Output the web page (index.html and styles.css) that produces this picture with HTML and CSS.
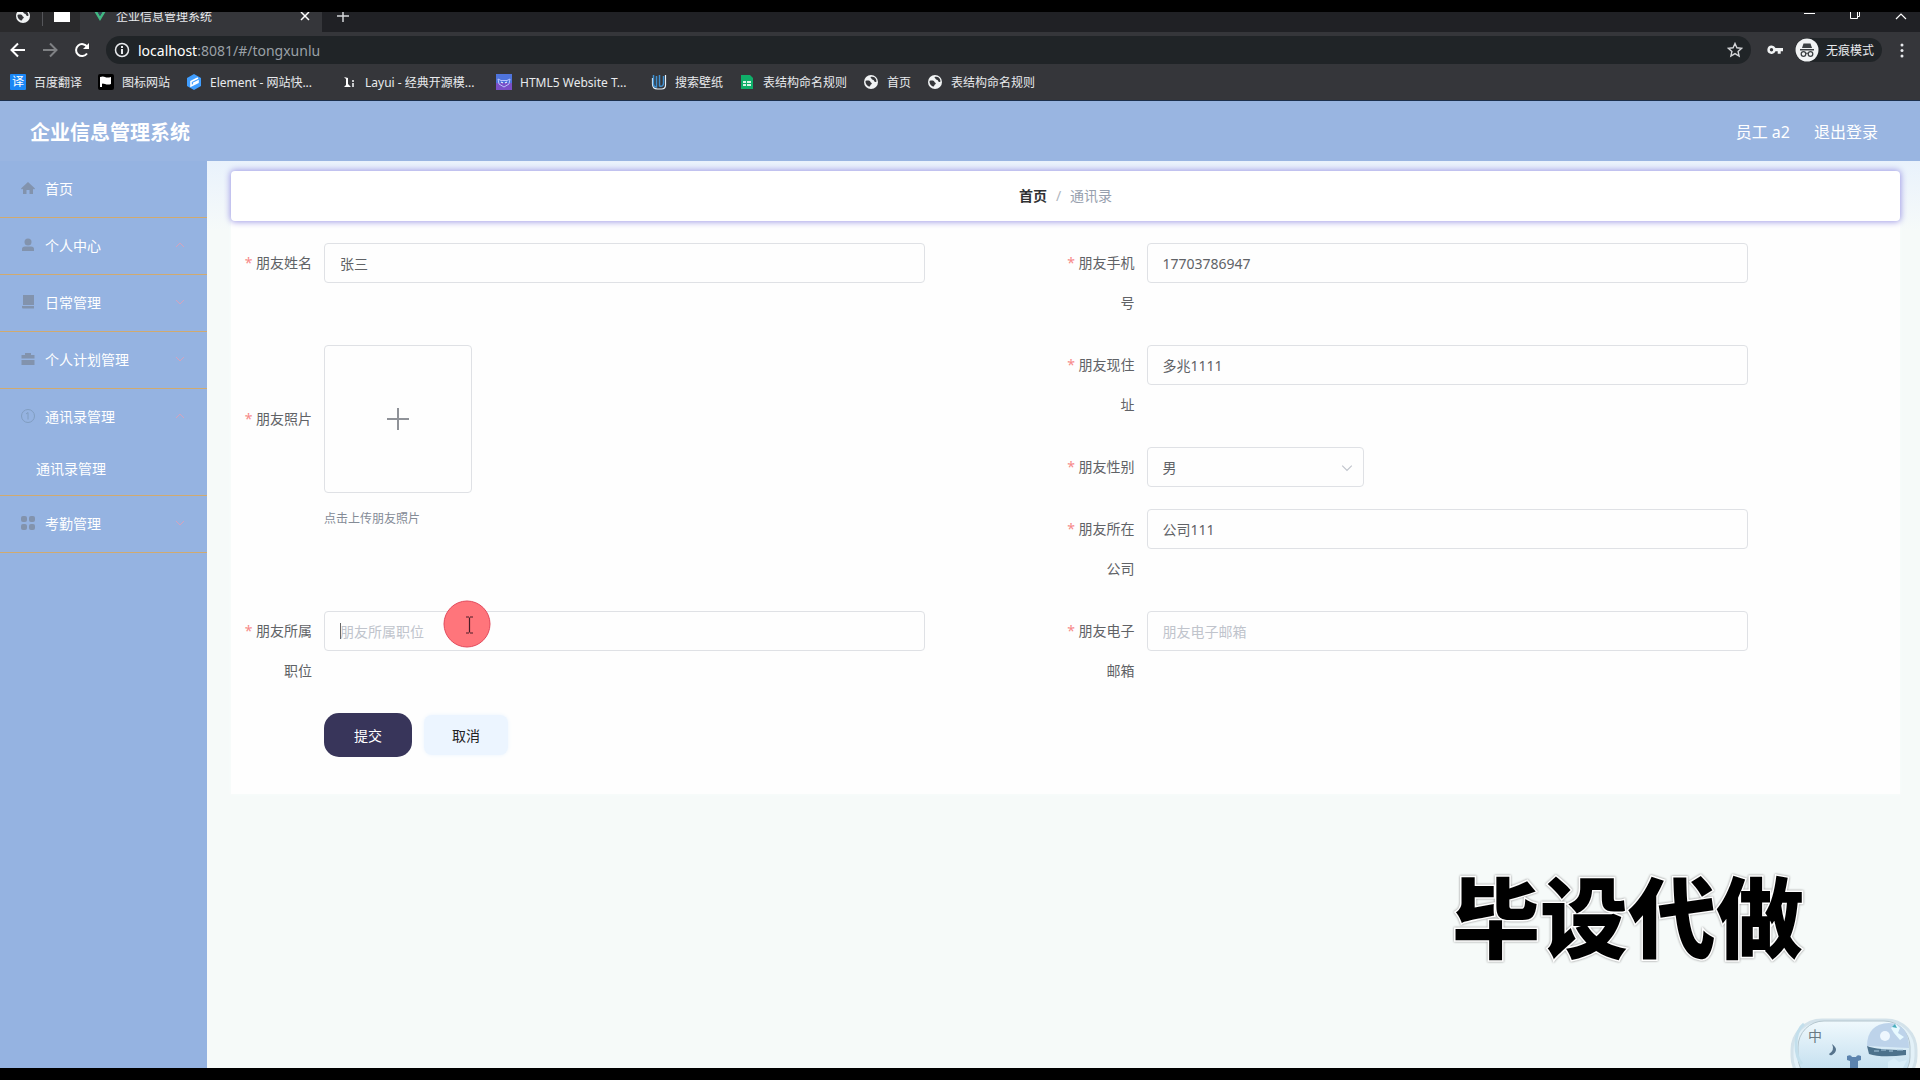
FILE: index.html
```html
<!DOCTYPE html>
<html lang="zh-CN">
<head>
<meta charset="utf-8">
<meta name="viewport" content="width=device-width, initial-scale=1">
<title>企业信息管理系统</title>
<link rel="stylesheet" href="styles.css">
</head>
<body>
<svg class="defs" width="0" height="0" aria-hidden="true">
  <symbol id="globe" viewBox="0 0 16 16">
    <circle cx="8" cy="8" r="7" fill="#f1f3f4"/>
    <path d="M2.500 7c2-.8 4.500-.4 5 .9.200.9 1.400.5 1.300 1.600-.1 1.100-1.300.8-1.500 2-.1.900-.6 1.200-1.500.9C3.600 11.500 2.300 9.500 2.500 7z" fill="#35363a"/>
    <path d="M7.500 3c1.500-.6 3-.4 4.200.5 1.300 1.100 1.900 2.600 1.700 4.200-1.400.6-2.300-.1-2.500-1.100-.2-1-1.900-.4-2.200-1.500C8.500 4.200 7.400 4 7.500 3z" fill="#35363a"/>
  </symbol>
  <symbol id="down" viewBox="0 0 10 10"><path d="M1 3l4 4 4-4" fill="none" stroke="currentColor" stroke-width="1"/></symbol>
  <symbol id="up" viewBox="0 0 10 10"><path d="M1 7l4-4 4 4" fill="none" stroke="currentColor" stroke-width="1"/></symbol>
</svg>

<div class="browser">
  <div class="tabstrip">
    <div class="tabs">
      <div class="pins">
        <svg class="pin" viewBox="0 0 16 16"><use href="#globe"/></svg>
        <i class="pin-line"></i>
        <svg class="pin" viewBox="0 0 16 16"><path d="M0 2h16v12H0z" fill="#fff"/></svg>
      </div>
      <div class="tab">
        <svg class="ico12" viewBox="0 0 12 12"><path d="M0 1h3l3 5 3-5h3L6 11z" fill="#41b883"/><path d="M3 1h2l1 2 1-2h2L6 6z" fill="#35495e"/></svg>
        <span class="tab-title">企业信息管理系统</span>
        <button class="plain" aria-label="关闭标签页"><svg class="ico10" viewBox="0 0 10 10"><path d="M1 1l8 8M9 1L1 9" stroke="#fff" stroke-width="1.500"/></svg></button>
      </div>
      <button class="plain newtab" aria-label="新标签页"><svg class="ico12" viewBox="0 0 12 12"><path d="M6 0v12M0 6h12" stroke="#d5d7da" stroke-width="1.500"/></svg></button>
      <div class="winctl">
        <svg class="ico12" viewBox="0 0 12 12"><path d="M1 3.500h11" stroke="#fff" stroke-width="1"/></svg>
        <svg class="ico12" viewBox="0 0 12 12"><path d="M1.500 0v8.500h7V0M8 6.500h2.500V0" fill="none" stroke="#fff"/></svg>
        <svg class="ico12" viewBox="0 0 12 12"><path d="M1 9l5-5 5 5" fill="none" stroke="#fff" stroke-width="1.200"/></svg>
      </div>
    </div>
  </div>
  <div class="toolbar">
    <button class="plain" aria-label="后退"><svg class="ico16" viewBox="0 0 16 16"><path d="M15 8H2M8 1.500L1.500 8 8 14.500" fill="none" stroke="#fff" stroke-width="2"/></svg></button>
    <button class="plain" aria-label="前进"><svg class="ico16" viewBox="0 0 16 16"><path d="M1 8h13M8 1.500L14.500 8 8 14.500" fill="none" stroke="#7f8184" stroke-width="2"/></svg></button>
    <button class="plain" aria-label="重新加载"><svg class="ico16" viewBox="0 0 16 16"><path d="M13 11.500A6 6 0 1 1 13.200 5" fill="none" stroke="#fff" stroke-width="2"/><path d="M15 1v6H9z" fill="#fff"/></svg></button>
    <div class="address">
      <svg class="ico16" viewBox="0 0 16 16"><circle cx="8" cy="8" r="6.500" fill="none" stroke="#e8eaed" stroke-width="1.500"/><path d="M8 7v5M8 4v2" stroke="#e8eaed" stroke-width="2"/></svg>
      <span class="url"><b>localhost</b>:8081/#/tongxunlu</span>
      <svg class="ico16" viewBox="0 0 16 16"><path d="M8 1.500l1.900 4.300 4.700.5-3.500 3.100 1 4.600L8 11.600 3.900 14l1-4.600L1.400 6.300l4.700-.5z" fill="none" stroke="#d5d7da" stroke-width="1.400"/></svg>
    </div>
    <svg class="ico16" viewBox="0 0 16 16"><path d="M4.500 3.500a4.200 4.200 0 1 0 4 5.700h2.200v2.600h3V9.200H16V6H8.500a4.200 4.200 0 0 0-4-2.500zm0 2.500a1.700 1.700 0 1 1 0 3.400 1.700 1.700 0 0 1 0-3.400z" fill="#f1f3f4"/></svg>
    <div class="incog">
      <svg class="ico24" viewBox="0 0 24 24"><circle cx="12" cy="12" r="11.500" fill="#f1f3f4"/><path d="M8.500 5.500h7l1.500 4.500H7zM5 11h14v1.500H5z" fill="#3c4043"/><circle cx="8.500" cy="16" r="2.300" fill="none" stroke="#3c4043" stroke-width="1.300"/><circle cx="15.500" cy="16" r="2.300" fill="none" stroke="#3c4043" stroke-width="1.300"/><path d="M10.800 15.500q1.200-.8 2.400 0" fill="none" stroke="#3c4043"/></svg>
      <span>无痕模式</span>
    </div>
    <button class="plain" aria-label="菜单"><svg class="ico16" viewBox="0 0 16 16"><g fill="#e8eaed"><circle cx="8" cy="3" r="1.500"/><circle cx="8" cy="8.500" r="1.500"/><circle cx="8" cy="14" r="1.500"/></g></svg></button>
  </div>
  <nav class="bookmarks">
    <a href="#"><span class="bm-fanyi">译</span><span>百度翻译</span></a>
    <a href="#"><svg class="ico16" viewBox="0 0 16 16"><rect width="16" height="16" rx="2" fill="#000"/><path d="M2 3q3-1 5 0t6 0v7q-3 1-6 0t-3 0v3H2z" fill="#fff"/></svg><span>图标网站</span></a>
    <a href="#"><svg class="ico16" viewBox="0 0 16 16"><path d="M8 0l7 4v8l-7 4-7-4V4z" fill="#409eff"/><path d="M12 4L5 7.500V12l7-3.500V7L7 9.500" fill="none" stroke="#fff" stroke-width="1.600"/></svg><span class="bm-long">Element - 网站快...</span></a>
    <a href="#"><svg class="ico16" viewBox="0 0 16 16"><path d="M3 3l4 1v6l3 3H3l2-2V5z" fill="#fff"/><path d="M11 6h2v2h-2zM11 9h2v4h-2z" fill="#c9cacc"/></svg><span class="bm-long">Layui - 经典开源模...</span></a>
    <a href="#"><svg class="ico16" viewBox="0 0 16 16"><rect width="16" height="16" fill="#4f74dc"/><path d="M0 9h16v7H0z" fill="#7a4fc8"/><path d="M2 5l3 1.500h6L14 5l-1 5-5 3-5-3z" fill="none" stroke="#b9c4ff"/><path d="M5 8l2 1M11 8L9 9" stroke="#fff"/></svg><span class="bm-long">HTML5 Website T...</span></a>
    <a href="#"><svg class="ico16" viewBox="0 0 16 16"><path d="M1.500 4v6q0 5 5 5h4q4 0 4-4V1" fill="none" stroke="#e6f2fb" stroke-width="1.200"/><path d="M2.500 1v9q0 3 3 3V2M8.500 1v11q4 1 4-3V2" fill="none" stroke="#3f8fd0" stroke-width="1.500"/></svg><span>搜索壁纸</span></a>
    <a href="#"><svg class="ico16" viewBox="0 0 16 16"><path d="M2 1h9l3 3v11H2z" fill="#0fae69"/><path d="M4 7h3v2H4zM8 7h4v2H8zM4 10h3v2H4zM8 10h4v2H8z" fill="#d8f5e6"/></svg><span>表结构命名规则</span></a>
    <a href="#"><svg class="ico16" viewBox="0 0 16 16"><use href="#globe"/></svg><span>首页</span></a>
    <a href="#"><svg class="ico16" viewBox="0 0 16 16"><use href="#globe"/></svg><span>表结构命名规则</span></a>
  </nav>
</div>

<div class="app">
  <header class="header">
    <h1>企业信息管理系统</h1>
    <div class="account"><span>员工 a2</span><a href="#">退出登录</a></div>
  </header>

  <div class="body">
    <nav class="sidebar">
      <a class="item" href="#"><svg class="ico14" viewBox="0 0 14 14"><path d="M7 1L0 7.500l1 1L2 7.700V13h3.500V9h3v4H12V7.700l1 .8 1-1z"/></svg><span>首页</span></a>
      <a class="item" href="#"><svg class="ico14" viewBox="0 0 14 14"><circle cx="7" cy="4" r="3.500"/><path d="M1 13V11q0-2.500 3-2.500h6q3 0 3 2.500v2z"/></svg><span>个人中心</span><svg class="arrow" viewBox="0 0 10 10"><use href="#up"/></svg></a>
      <a class="item" href="#"><svg class="ico14" viewBox="0 0 14 14"><path d="M2 0h11v10H2zM1 11h12v2.500H2q-1 0-1-1.500z"/></svg><span>日常管理</span><svg class="arrow" viewBox="0 0 10 10"><use href="#down"/></svg></a>
      <a class="item" href="#"><svg class="ico14" viewBox="0 0 14 14"><path d="M4 1h6v2h3.500v3.500h-13V3H4zM.5 8h13v5H.5z"/></svg><span>个人计划管理</span><svg class="arrow" viewBox="0 0 10 10"><use href="#down"/></svg></a>
      <div class="group">
        <a class="item" href="#"><svg class="ico14 line" viewBox="0 0 14 14"><circle cx="7" cy="7" r="6.500"/><path d="M7 3.500v7M5 5l2-1.500"/></svg><span>通讯录管理</span><svg class="arrow" viewBox="0 0 10 10"><use href="#up"/></svg></a>
        <a class="sub" href="#">通讯录管理</a>
      </div>
      <a class="item" href="#"><svg class="ico14" viewBox="0 0 14 14"><rect width="6" height="6" rx="2"/><rect x="8" width="6" height="6" rx="2"/><rect y="8" width="6" height="6" rx="2"/><rect x="8" y="8" width="6" height="6" rx="2"/></svg><span>考勤管理</span><svg class="arrow" viewBox="0 0 10 10"><use href="#down"/></svg></a>
    </nav>

    <main class="main">
      <div class="crumbs"><a href="#">首页</a><i>/</i><span>通讯录</span></div>
      <form class="card">
        <div class="cols">
          <div class="field"><label for="name"><em>*</em> 朋友姓名</label><div class="ctl"><input id="name" type="text" value="张三"></div></div>
          <div class="field"><label for="phone"><em>*</em> 朋友手机号</label><div class="ctl"><input id="phone" type="text" value="17703786947"></div></div>
        </div>
        <div class="cols">
          <div class="field photo">
            <label for="photo"><em>*</em> 朋友照片</label>
            <div class="ctl">
              <button id="photo" class="upload" type="button" aria-label="上传朋友照片"><svg class="ico24" viewBox="0 0 24 24"><path d="M12 1v22M1 12h22" stroke="#8f9298" stroke-width="2"/></svg></button>
              <p class="tip">点击上传朋友照片</p>
            </div>
          </div>
          <div class="stack">
            <div class="field"><label for="addr"><em>*</em> 朋友现住址</label><div class="ctl"><input id="addr" type="text" value="多兆1111"></div></div>
            <div class="field"><label for="sex"><em>*</em> 朋友性别</label><div class="ctl"><div class="pick"><select id="sex"><option>男</option><option>女</option></select><svg class="pick-arrow" viewBox="0 0 10 10"><use href="#down"/></svg></div></div></div>
            <div class="field"><label for="corp"><em>*</em> 朋友所在公司</label><div class="ctl"><input id="corp" type="text" value="公司111"></div></div>
          </div>
        </div>
        <div class="cols">
          <div class="field"><label for="job"><em>*</em> 朋友所属职位</label><div class="ctl"><input id="job" type="text" placeholder="朋友所属职位"><i class="caret"></i>
            <svg class="pointer" viewBox="0 0 48 48"><circle cx="24" cy="24" r="23" fill="#ff757b" stroke="#e2495b"/><path d="M23 17h3m1 0h3M26.500 17.500v15M23 33h3m1 0h3" fill="none" stroke="#4a1c26" stroke-width="1.200"/></svg></div></div>
          <div class="field"><label for="mail"><em>*</em> 朋友电子邮箱</label><div class="ctl"><input id="mail" type="text" placeholder="朋友电子邮箱"></div></div>
        </div>
        <div class="actions"><button class="submit" type="button">提交</button><button class="cancel" type="button">取消</button></div>
      </form>
    </main>
  </div>

  <div class="watermark">毕设代做</div>
  <div class="ime">
    <svg class="ime-art" viewBox="0 0 130 60" aria-hidden="true">
      <defs><linearGradient id="g" x1="0" y1="0" x2="0" y2="1"><stop offset="0" stop-color="#f0f9fd"/><stop offset="1" stop-color="#b9d9ec"/></linearGradient></defs>
      <rect x="2" y="2" width="124" height="66" rx="30" fill="#e3f1f8" stroke="#d3e2ea" stroke-width="3"/>
      <rect x="8" y="3" width="112" height="62" rx="26" fill="url(#g)" stroke="#b4c6ce"/>
      <path d="M14 6q-8 6-8 20t6 20" fill="none" stroke="#c3dfec" stroke-width="3"/>
      <path d="M77 28q0-22 22-23 20 1 20 25z" fill="#bdd3ea"/>
      <circle cx="95" cy="18" r="5" fill="#eef7fe"/>
      <path d="M101 10l5-4 4 4-2 5 6 4-4 3-6-7z" fill="#e8faff"/>
      <path d="M102 9l3-3 2 4z" fill="#48aebd"/>
      <path d="M77 28q10 4 39 4v5q-25 3-37-1z" fill="#4d728c"/>
      <path d="M84 33h5m2-1h5m3 1h4m4-1h6" stroke="#a9c8de" stroke-width="1"/>
      <path d="M98 44l6-4 5 4 8-2-4 8H98z" fill="#d8edf8"/>
      <path d="M42 26q8 6 0 11-2 1-3-1 6-4 3-10z" fill="#56738c"/>
      <path d="M57 38q4-2 5 1h4q1-3 5-1v4l-3 1v12h-8V43l-3-1z" fill="#5b83ae"/>
    </svg>
    <span class="ime-mode">中</span>
  </div>
</div>
</body>
</html>
```
FILE: styles.css
```css
* { box-sizing: border-box; }

body {
  margin: 0;
  min-height: 100vh;
  display: flex;
  flex-direction: column;
  border-top: 12px solid #000;
  border-bottom: 12px solid #000;
  font-family: "Noto Sans", "Noto Sans CJK SC", sans-serif;
  font-size: 14px;
  color: #606266;
  background: #f6faf9;
}

a { color: inherit; text-decoration: none; }
i, em { font-style: normal; }
button, input, select { font: inherit; }
svg { display: block; flex: none; }
.defs { position: absolute; }
.plain { display: flex; padding: 0; border: 0; background: none; }
.ico10 { width: 10px; height: 10px; }
.ico12 { width: 12px; height: 12px; }
.ico14 { width: 14px; height: 14px; }
.ico16 { width: 16px; height: 16px; }
.ico24 { width: 24px; height: 24px; }

/* browser chrome */
.browser {
  background: #35363a;
  border-bottom: 1px solid #1c2f4c;
  color: #e8eaed;
  font-size: 12px;
}
.tabstrip { height: 20px; overflow: hidden; background: #202125; }
.tabs { display: flex; align-items: center; height: 32px; margin-top: -12px; }
.pins {
  display: flex;
  align-items: center;
  gap: 11px;
  width: 80px;
  height: 32px;
  padding-left: 15px;
  background: #2a2a2c;
}
.pin { width: 16px; height: 16px; }
.pin-line { width: 1px; height: 20px; background: #55565a; }
.tab {
  display: flex;
  align-items: center;
  gap: 10px;
  width: 242px;
  height: 32px;
  padding: 0 12px 0 14px;
  background: #35363a;
}
.tab-title { flex: 1; }
.newtab { margin-left: 15px; }
.winctl { display: flex; gap: 34px; margin-left: auto; padding-right: 13px; }
.toolbar {
  display: flex;
  align-items: center;
  gap: 16px;
  height: 36px;
  padding: 0 10px;
}
.address {
  flex: 1;
  display: flex;
  align-items: center;
  gap: 8px;
  height: 28px;
  padding: 0 8px;
  border-radius: 14px;
  background: #202427;
}
.url { flex: 1; font-size: 14px; color: #9aa0a6; }
.url b { font-weight: 400; color: #fff; }
.incog {
  display: flex;
  align-items: center;
  gap: 7px;
  margin: 0 -4px;
  padding-right: 8px;
  border-radius: 12px;
  background: #202427;
}
.bookmarks {
  display: flex;
  align-items: center;
  gap: 16px;
  height: 32px;
  padding: 0 10px 4px;
}
.bookmarks a { display: flex; align-items: center; gap: 8px; white-space: nowrap; }
.bm-long { min-width: 115px; }
.bm-fanyi {
  width: 16px;
  height: 16px;
  line-height: 16px;
  text-align: center;
  color: #fff;
  background: #1b87f5;
  border-radius: 1px;
}

/* application */
.app {
  position: relative;
  flex: 1;
  display: flex;
  flex-direction: column;
  overflow: hidden;
}
.header {
  display: flex;
  align-items: center;
  justify-content: space-between;
  height: 60px;
  padding: 0 42px 0 30px;
  background: #99b5e1;
  color: #fff;
  font-size: 16px;
}
.header h1 { margin: 0; font-size: 20px; font-weight: 700; }
.account { display: flex; gap: 24px; }
.body { flex: 1; display: flex; }
.sidebar { width: 207px; background: #95b3e1; color: #fff; }
.item { display: flex; align-items: center; gap: 10px; height: 56px; padding: 0 22px 2px 21px; }
.sidebar > * { border-bottom: 1px solid #d0aa70; }
.sidebar > .item { height: 57px; }
.item .ico14 { fill: #8293ad; }
.item .line { fill: none; stroke: #809dc0; }
.arrow { width: 10px; height: 10px; margin-left: auto; color: #d5a3bd; }
.sub { display: block; height: 50px; line-height: 48px; padding-left: 36px; }

.main { flex: 1; padding: 10px 20px 0 24px; background: linear-gradient(#e9f2fc, #f6faf9 70px); }
.crumbs {
  position: relative;
  display: flex;
  align-items: center;
  justify-content: center;
  gap: 9px;
  height: 50px;
  padding-bottom: 2px;
  border-radius: 4px;
  background: #fff;
  box-shadow: 0 0 6px 1px #a09ce6;
  color: #97a0ae;
}
.crumbs a { font-weight: 700; color: #303133; }
.crumbs i { color: #b0b6c0; }

.card {
  padding: 22px 11px 37px 13px;
  background: #fefefe;
  box-shadow: 0 0 3px #fafcfc;
}
.cols { display: grid; grid-template-columns: 1fr 1fr; }
.field { display: flex; margin-bottom: 22px; }
.field label { width: 80px; padding-right: 12px; text-align: right; line-height: 40px; }
.field em { color: #f78989; }
.ctl { position: relative; flex: 1; }
.ctl input, .pick select {
  width: 81%;
  height: 40px;
  padding: 0 15px;
  border: 1px solid #dfe1e5;
  border-radius: 4px;
  outline: 0;
  background: #fefefe;
  color: #606266;
}
.ctl input { display: block; }
.ctl input::placeholder { color: #c0c4cc; }
.pick { position: relative; width: 217px; }
.pick select { display: block; width: 100%; appearance: none; }
.pick-arrow { position: absolute; right: 11px; top: 15px; width: 12px; height: 12px; color: #c0c4cc; }
.photo label { line-height: 148px; }
.upload {
  display: grid;
  place-items: center;
  width: 148px;
  height: 148px;
  padding: 0;
  border: 1px solid #dfe1e5;
  border-radius: 4px;
  background: #fefefe;
}
.tip { margin: 16px 0 0; font-size: 12px; line-height: 20px; color: #848b96; }
.caret { position: absolute; left: 16px; top: 12px; width: 1px; height: 16px; background: #666; }
.pointer { position: absolute; left: 119px; top: -11px; width: 48px; height: 48px; }
.actions { display: flex; align-items: center; gap: 12px; padding-left: 80px; }
.submit { width: 88px; height: 44px; border: 0; border-radius: 15px; background: #38355a; color: #fff; }
.cancel { width: 84px; height: 40px; border: 0; border-radius: 8px; background: #ecf5ff; color: #222; box-shadow: 0 0 4px #ecf5ff; }

/* overlays */
.watermark {
  position: absolute;
  right: 116px;
  bottom: 91px;
  font-family: "Noto Sans CJK SC", sans-serif;
  font-size: 88px;
  font-weight: 900;
  line-height: 128px;
  color: #000;
  -webkit-text-stroke: 3px #fff;
  paint-order: stroke fill;
  filter: drop-shadow(0 0 1px #888);
}
.ime { position: absolute; right: 0; bottom: 0; width: 130px; height: 50px; overflow: hidden; }
.ime-art { width: 130px; height: 60px; }
.ime-mode { position: absolute; left: 18px; top: 8px; font-size: 14px; line-height: 20px; color: #6a7a83; }
```
